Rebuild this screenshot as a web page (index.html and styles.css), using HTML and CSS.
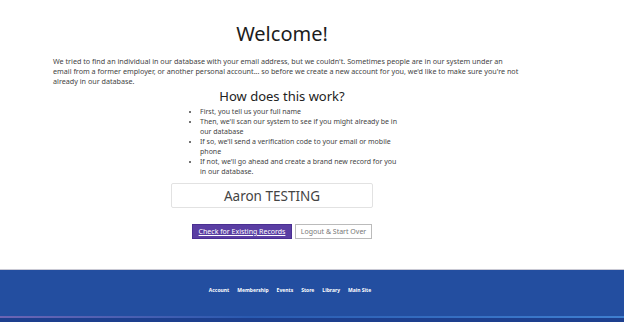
FILE: index.html
```html
<!DOCTYPE html>
<html>
<head>
<meta charset="utf-8">
<link rel="stylesheet" href="styles.css">
</head>
<body>
<main class="main">
  <h1 class="title">Welcome!</h1>
  <p class="intro">We tried to find an individual in our database with your email address, but we couldn't. Sometimes people are in our system under an<br>email from a former employer, or another personal account... so before we create a new account for you, we'd like to make sure you're not<br>already in our database.</p>
  <h2 class="subtitle">How does this work?</h2>
  <ul class="steps">
    <li>First, you tell us your full name</li>
    <li>Then, we'll scan our system to see if you might already be in our database</li>
    <li>If so, we'll send a verification code to your email or mobile phone</li>
    <li>If not, we'll go ahead and create a brand new record for you in our database.</li>
  </ul>
  <div class="name-box">Aaron TESTING</div>
  <div class="actions">
    <a class="btn btn-primary" href="#">Check for Existing Records</a>
    <a class="btn btn-outline" href="#">Logout &amp; Start Over</a>
  </div>
</main>
<footer class="footer">
  <nav class="footer-nav">
    <a href="#">Account</a>
    <a href="#">Membership</a>
    <a href="#">Events</a>
    <a href="#">Store</a>
    <a href="#">Library</a>
    <a href="#">Main Site</a>
  </nav>
  <div class="stripe"></div>
  <div class="bottom"></div>
</footer>
</body>
</html>
```
FILE: styles.css
```css
html, body {
  margin: 0;
  padding: 0;
  background: #fff;
  font-family: "Noto Sans", "DejaVu Sans", sans-serif;
  color: #333;
}
.main {
  width: 458px;
  margin-left: 53px;
  padding-top: 22px;
  display: flex;
  flex-direction: column;
  align-items: center;
}
.title {
  margin: 0;
  font-weight: 400;
  font-size: 20px;
  line-height: 24px;
  color: #1c1c1c;
}
.intro {
  margin: 10px 0 0;
  width: 490px;
  align-self: flex-start;
  font-size: 7.2px;
  line-height: 10px;
  color: #444;
}
.subtitle {
  margin: 2px 0 0;
  font-weight: 400;
  font-size: 13px;
  line-height: 16px;
  color: #222;
}
.steps {
  margin: 3px 0 0 28px;
  padding: 0 0 0 8px;
  width: 200px;
  font-size: 7px;
  line-height: 10px;
  color: #444;
}
.name-box {
  margin: 6px 20px 0 0;
  width: 200px;
  height: 23px;
  border: 1px solid #e2e2e2;
  border-radius: 2px;
  display: flex;
  align-items: center;
  justify-content: center;
  font-size: 13.5px;
  color: #444;
}
.actions {
  margin-top: 16px;
  display: flex;
  gap: 3px;
}
.btn {
  display: flex;
  align-items: center;
  justify-content: center;
  height: 15px;
  font-size: 7px;
  text-decoration: none;
  box-sizing: border-box;
}
.btn-primary {
  width: 100px;
  background: #5a3ea3;
  color: #fff;
  text-decoration: underline;
  border: 1px solid #4a2f92;
}
.btn-outline {
  width: 77px;
  background: #fff;
  color: #777;
  border: 1px solid #bbb;
}
.footer {
  margin-top: 30px;
  border-top: 1px solid #c9c9d4;
  background: #234ea0;
}
.footer-nav {
  height: 40px;
  padding: 0 44px 6px 0;
  display: flex;
  justify-content: center;
  align-items: center;
  gap: 8px;
}
.footer-nav a {
  color: #fff;
  font-size: 5px;
  font-weight: 700;
  text-decoration: none;
}
.stripe {
  height: 2px;
  background: linear-gradient(90deg, #6c64b4, #2a5ab0 40%, #3f7fd0);
}
.bottom {
  height: 10px;
  background: #1d3f8e;
}
```
